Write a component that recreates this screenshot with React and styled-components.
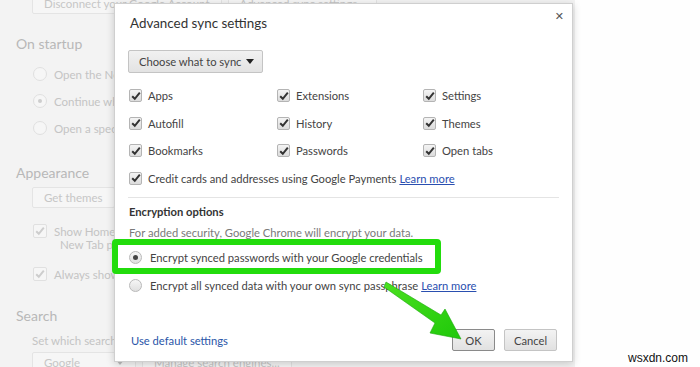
import React from "react";
import styled, { createGlobalStyle } from "styled-components";

const Global = createGlobalStyle`
  html, body { margin: 0; padding: 0; }
  body { font-family: Lato, "Open Sans", sans-serif; }
`;

const Page = styled.div`
  position: relative;
  width: 700px;
  height: 367px;
  overflow: hidden;
  display: grid;
  grid-template-columns: 575px 1fr;
  background: #fff;
`;

const Settings = styled.div`
  background: #f3f3f3;
  display: flex;
  flex-direction: column;
  padding: 0 0 0 16px;
  color: #c4c4c4;
  font-size: 11.5px;
`;

const Blank = styled.div`
  background: #fefefe;
`;

const BgRow = styled.div`
  display: flex;
  align-items: center;
  gap: ${(p) => p.$gap || 4}px;
  margin-left: ${(p) => p.$indent || 0}px;
  margin-top: ${(p) => p.$mt || 0}px;
  height: ${(p) => p.$h || 20}px;
  flex: none;
  white-space: nowrap;
`;

const BgButton = styled.div`
  height: 21px;
  box-sizing: border-box;
  padding: 0 11px;
  border: 1px solid #e4e4e4;
  border-radius: 2px;
  background: #f6f6f6;
  display: flex;
  align-items: center;
  justify-content: space-between;
  min-width: ${(p) => p.$w || 0}px;
  color: #c6c6c6;
  white-space: nowrap;
`;

const BgHeading = styled.div`
  font-size: 14px;
  color: #b8b8b8;
  height: 22px;
  line-height: 22px;
  flex: none;
  margin-top: ${(p) => p.$mt || 0}px;
  white-space: nowrap;
`;

const BgRadio = styled.span`
  width: 12px;
  height: 12px;
  border-radius: 50%;
  border: 1px solid #e0e0e0;
  background: #f6f6f6;
  display: inline-flex;
  align-items: center;
  justify-content: center;
  flex: none;
  &::after {
    content: "";
    width: 4px;
    height: 4px;
    border-radius: 50%;
    background: ${(p) => (p.$on ? "#cdcdcd" : "transparent")};
  }
`;

const BgCheck = styled.span`
  width: 12px;
  height: 12px;
  border: 1px solid #e0e0e0;
  border-radius: 2px;
  background: #f6f6f6;
  display: inline-flex;
  align-items: center;
  justify-content: center;
  flex: none;
`;

/* ---------- dialog ---------- */

const Dialog = styled.div`
  position: absolute;
  left: 114px;
  top: 3px;
  width: 459px;
  height: 359px;
  box-sizing: border-box;
  background: #fff;
  border: 1px solid #cfcfcf;
  box-shadow: 0 2px 8px rgba(0, 0, 0, 0.18);
  display: flex;
  flex-direction: column;
  padding: 0 13px;
  color: #333;
  font-size: 11.2px;
`;

const Header = styled.div`
  display: flex;
  justify-content: space-between;
  align-items: flex-start;
  height: 44px;
  padding-left: 2px;
  flex: none;
`;

const Title = styled.div`
  font-size: 13.4px;
  color: #333;
  margin-top: 11px;
`;

const Close = styled.div`
  margin-top: 6px;
  margin-right: -5px;
  font-size: 11px;
  color: #555;
  font-weight: bold;
  font-family: "DejaVu Sans", sans-serif;
`;

const SelectBtn = styled.div`
  width: 135px;
  height: 23px;
  flex: none;
  box-sizing: border-box;
  border: 1px solid #c4c4c4;
  border-radius: 2px;
  background: linear-gradient(#f1f1f1, #e3e3e3);
  display: flex;
  align-items: center;
  justify-content: space-between;
  padding: 0 8px 0 10px;
  color: #444;
  white-space: nowrap;
  margin-top: 2px;
`;

const Caret = styled.span`
  width: 0;
  height: 0;
  border-left: 4px solid transparent;
  border-right: 4px solid transparent;
  border-top: 5px solid ${(p) => p.$color || "#222"};
`;

const Grid = styled.div`
  display: grid;
  grid-template-columns: 148px 146px 1fr;
  grid-auto-rows: 27.5px;
  margin-top: 9px;
  padding-left: 1px;
  flex: none;
`;

const Item = styled.div`
  display: flex;
  align-items: center;
  gap: 6px;
  color: #444;
  white-space: nowrap;
  grid-column: ${(p) => (p.$wide ? "1 / -1" : "auto")};
`;

const Box = styled.span`
  width: 13px;
  height: 13px;
  box-sizing: border-box;
  border: 1px solid #b4b4b4;
  border-radius: 2px;
  background: linear-gradient(#f4f4f4, #dcdcdc);
  display: inline-flex;
  align-items: center;
  justify-content: center;
  flex: none;
`;

const Link = styled.a`
  color: #2a4fb0;
  text-decoration: underline;
  margin-left: 3px;
  cursor: pointer;
`;

const Separator = styled.div`
  height: 1px;
  flex: none;
  background: #e4e4e4;
  margin-top: 5px;
`;

const SectionTitle = styled.div`
  font-weight: 700;
  color: #333;
  line-height: 16px;
  margin-top: 6px;
  padding-left: 1px;
`;

const Desc = styled.div`
  color: #7a7a7a;
  line-height: 16px;
  margin-top: 5px;
  padding-left: 1px;
`;

const RadioRow = styled.div`
  display: flex;
  align-items: center;
  gap: 8px;
  height: 28px;
  flex: none;
  padding-left: 1px;
  color: #444;
  white-space: nowrap;
  margin-top: ${(p) => p.$mt || 0}px;
`;

const Radio = styled.span`
  width: 13px;
  height: 13px;
  box-sizing: border-box;
  border-radius: 50%;
  border: 1px solid #b9b9b9;
  background: linear-gradient(#f6f6f6, #dfdfdf);
  display: inline-flex;
  align-items: center;
  justify-content: center;
  flex: none;
  &::after {
    content: "";
    width: 5px;
    height: 5px;
    border-radius: 50%;
    background: ${(p) => (p.$on ? "#444" : "transparent")};
  }
`;

const Footer = styled.div`
  margin-top: auto;
  margin-bottom: 10px;
  display: flex;
  align-items: center;
  gap: 9px;
  padding: 0 2px 0 3px;
`;

const DefaultLink = styled.span`
  color: #2a56a8;
  margin-right: auto;
  margin-top: 1px;
`;

const DlgButton = styled.div`
  height: 22px;
  min-width: ${(p) => p.$w}px;
  box-sizing: border-box;
  border: 1px solid ${(p) => (p.$primary ? "#8a8a8a" : "#c4c4c4")};
  border-radius: 2px;
  background: linear-gradient(#f3f3f3, #e1e1e1);
  display: flex;
  align-items: center;
  justify-content: center;
  color: #444;
`;

const Highlight = styled.div`
  position: absolute;
  left: 112px;
  top: 239px;
  width: 329px;
  height: 35px;
  box-sizing: border-box;
  border: 6px solid #22dc0c;
  border-radius: 4px;
  pointer-events: none;
`;

const Arrow = styled.svg`
  position: absolute;
  left: 378px;
  top: 276px;
  pointer-events: none;
`;

const Watermark = styled.div`
  position: absolute;
  right: 10px;
  bottom: 2px;
  background: #fff;
  padding: 0 2px;
  font-family: "Liberation Sans", Arial, sans-serif;
  font-size: 12px;
  color: #111;
`;

const Check = ({ color = "#333" }) => (
  <svg width="10" height="10" viewBox="0 0 10 10">
    <path d="M1.2 5.2 L3.8 7.8 L8.8 1.6" fill="none" stroke={color} strokeWidth="2" />
  </svg>
);

const items = [
  "Apps", "Extensions", "Settings",
  "Autofill", "History", "Themes",
  "Bookmarks", "Passwords", "Open tabs",
];

export default function App() {
  return (
    <>
      <Global />
      <Page>
        <Settings>
          <BgRow $mt={-7} $gap={6} $indent={16} $h={21}>
            <BgButton>Disconnect your Google Account</BgButton>
            <BgButton>Advanced sync settings...</BgButton>
          </BgRow>
          <BgHeading $mt={19}>On startup</BgHeading>
          <BgRow $mt={9} $indent={17} $gap={7}><BgRadio />Open the New Tab page</BgRow>
          <BgRow $mt={7} $indent={17} $gap={7}><BgRadio $on />Continue where you left off</BgRow>
          <BgRow $mt={7} $indent={17} $gap={7}><BgRadio />Open a specific page or set of pages.</BgRow>
          <BgHeading $mt={24}>Appearance</BgHeading>
          <BgRow $mt={3} $indent={16} $h={21} $gap={4}>
            <BgButton>Get themes</BgButton>
            <BgButton>Reset to default theme</BgButton>
          </BgRow>
          <BgRow $mt={13} $indent={17} $gap={7}><BgCheck><Check color="#cdcdcd" /></BgCheck>Show Home button</BgRow>
          <BgRow $mt={-6} $indent={44} $h={18}>New Tab page Change</BgRow>
          <BgRow $mt={11} $indent={17} $gap={7}><BgCheck><Check color="#cdcdcd" /></BgCheck>Always show the bookmarks bar</BgRow>
          <BgHeading $mt={21}>Search</BgHeading>
          <BgRow $mt={3} $indent={16}>Set which search engine is used when searching from the omnibox.</BgRow>
          <BgRow $mt={2} $indent={16} $h={21} $gap={6}>
            <BgButton $w={104}>Google <Caret $color="#bdbdbd" /></BgButton>
            <BgButton>Manage search engines...</BgButton>
          </BgRow>
        </Settings>
        <Blank />

        <Dialog>
          <Header>
            <Title>Advanced sync settings</Title>
            <Close>✕</Close>
          </Header>
          <SelectBtn>
            Choose what to sync <Caret />
          </SelectBtn>
          <Grid>
            {items.map((t) => (
              <Item key={t}>
                <Box><Check /></Box>
                {t}
              </Item>
            ))}
            <Item $wide>
              <Box><Check /></Box>
              <span>
                Credit cards and addresses using Google Payments
                <Link>Learn more</Link>
              </span>
            </Item>
          </Grid>
          <Separator />
          <SectionTitle>Encryption options</SectionTitle>
          <Desc>For added security, Google Chrome will encrypt your data.</Desc>
          <RadioRow $mt={2}>
            <Radio $on />
            Encrypt synced passwords with your Google credentials
          </RadioRow>
          <RadioRow>
            <Radio />
            <span>
              Encrypt all synced data with your own sync passphrase
              <Link>Learn more</Link>
            </span>
          </RadioRow>
          <Footer>
            <DefaultLink>Use default settings</DefaultLink>
            <DlgButton $w={43} $primary>OK</DlgButton>
            <DlgButton $w={53}>Cancel</DlgButton>
          </Footer>
        </Dialog>

        <Highlight />
        <Arrow width="90" height="70" viewBox="378 276 90 70">
          <defs>
            <linearGradient id="ag" x1="0" y1="0" x2="1" y2="1">
              <stop offset="0" stopColor="#4be01f" />
              <stop offset="1" stopColor="#1fc80a" />
            </linearGradient>
          </defs>
          <polygon
            points="386,282 441,315 445,309 461,339 430,333 435,323 384,287"
            fill="url(#ag)"
            stroke="#1aa80a"
            strokeWidth="0.6"
            strokeLinejoin="round"
          />
        </Arrow>
        <Watermark>wsxdn.com</Watermark>
      </Page>
    </>
  );
}
